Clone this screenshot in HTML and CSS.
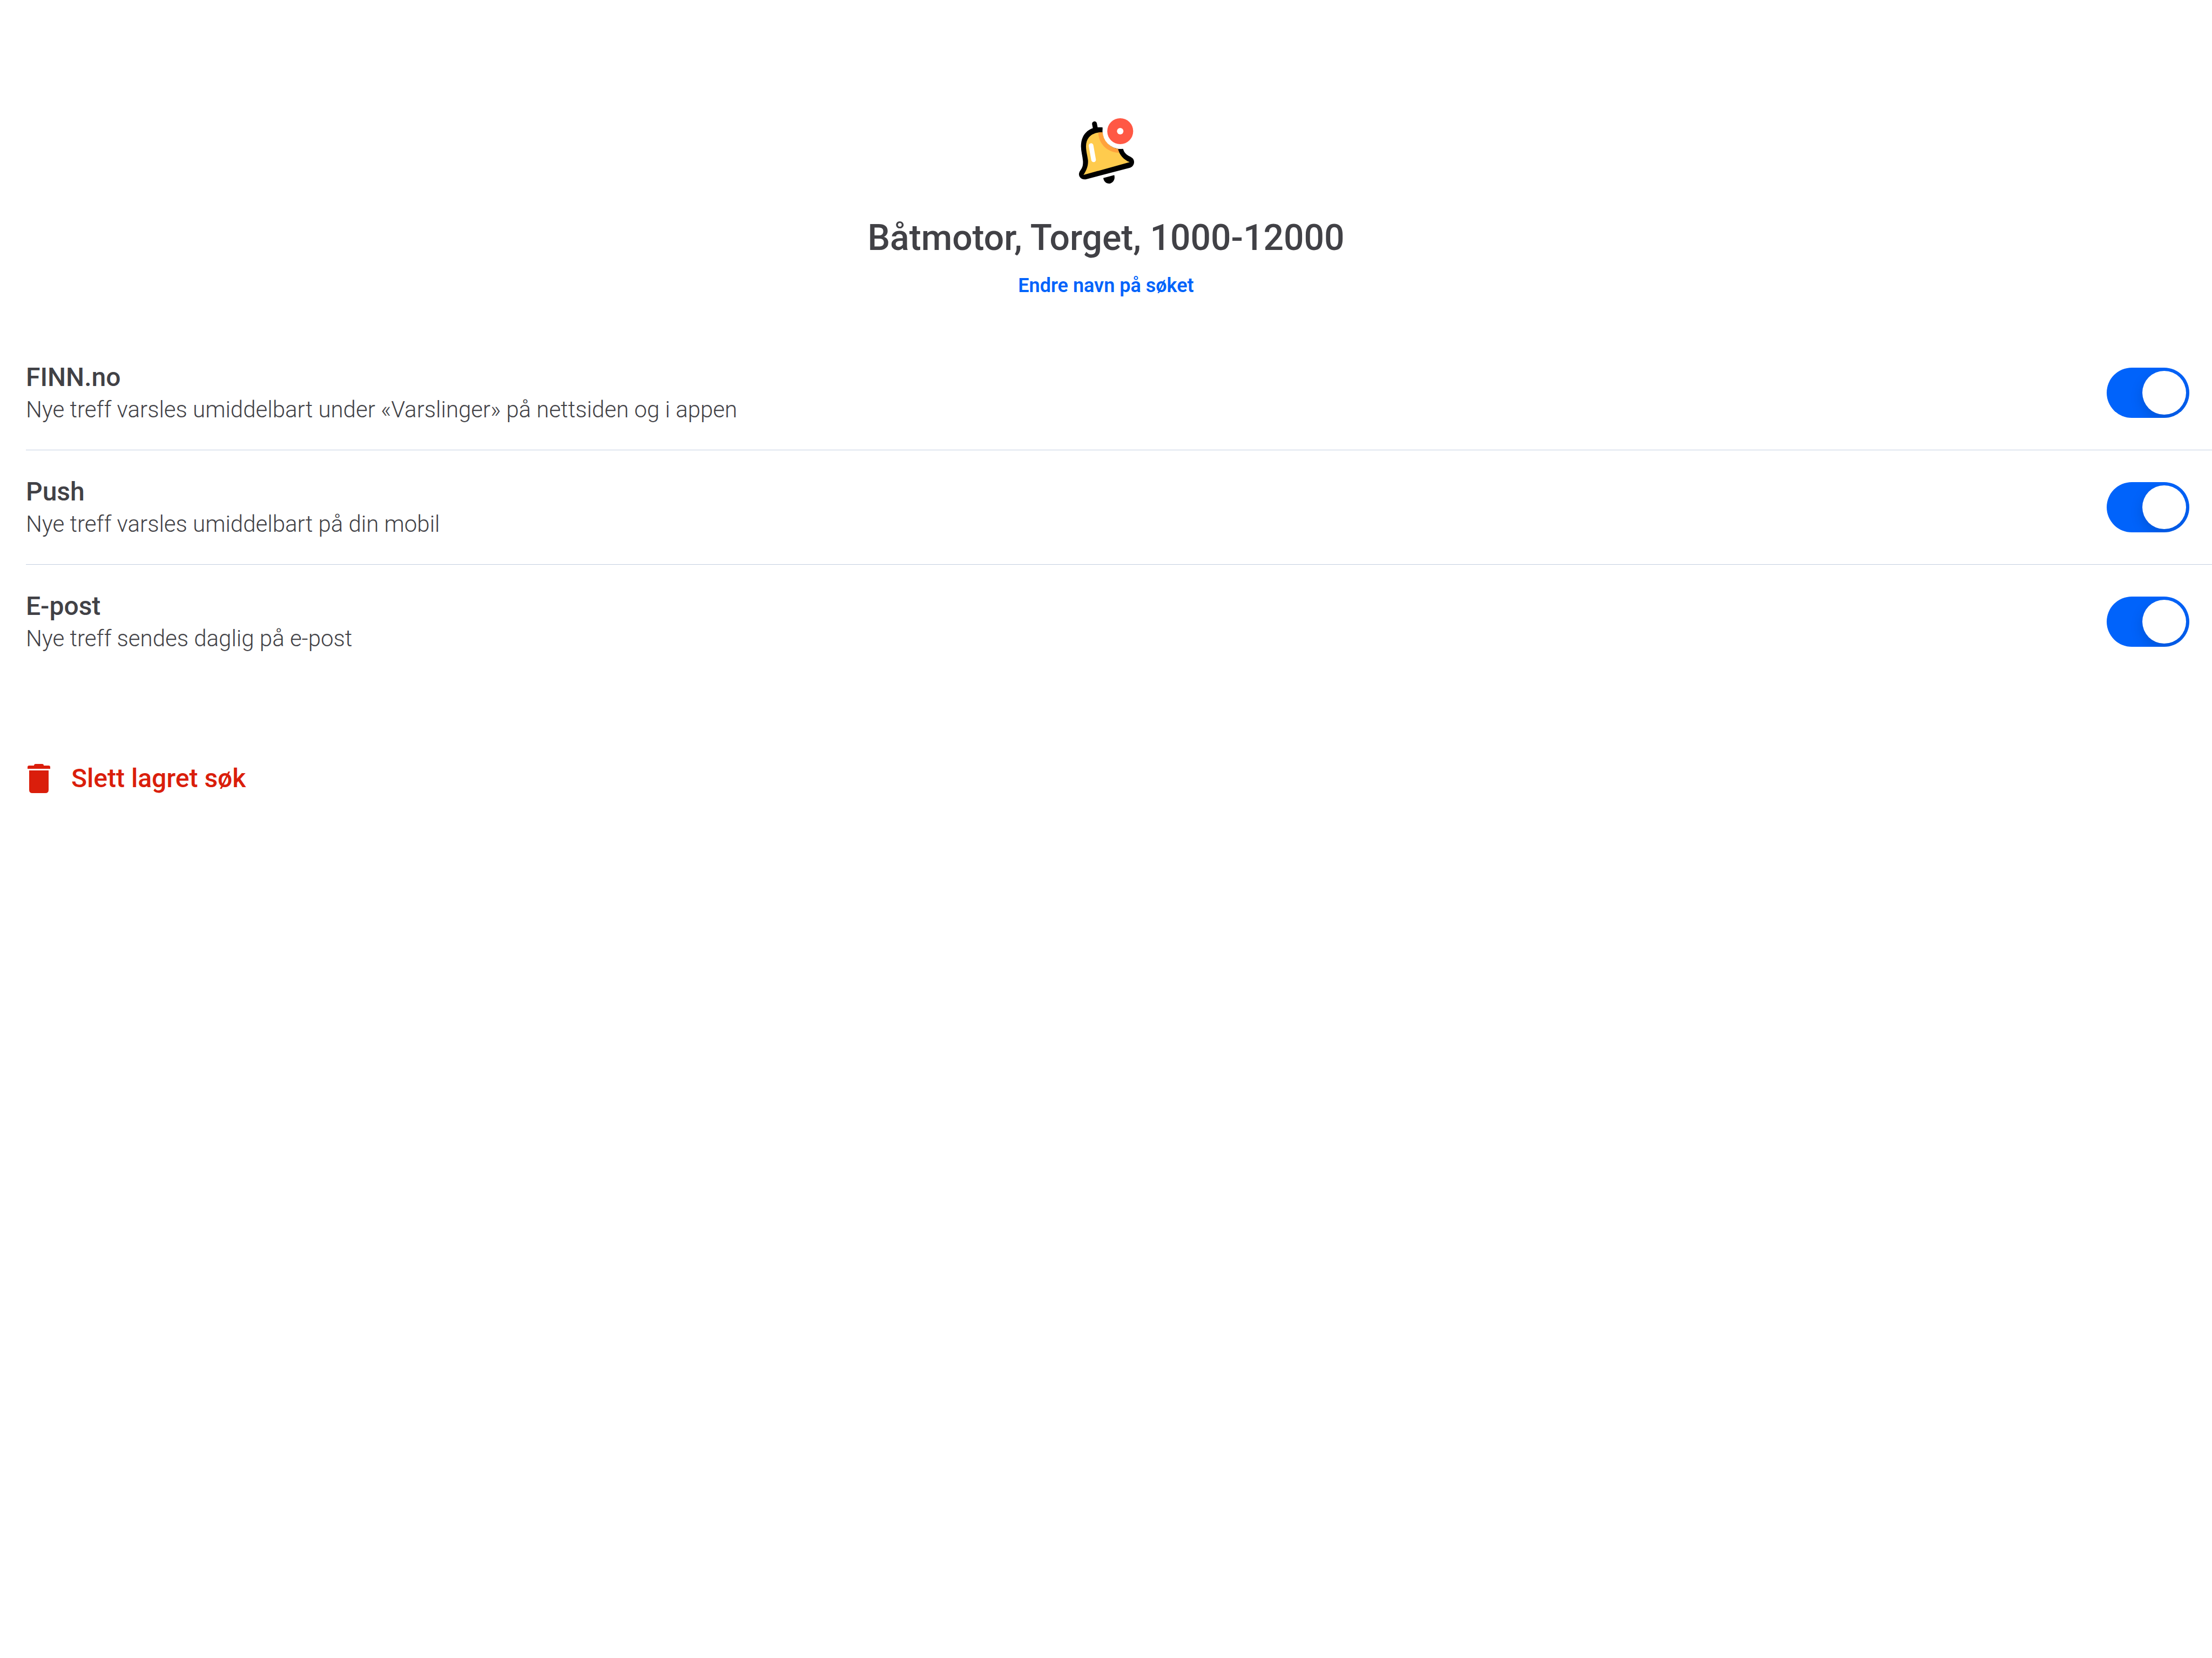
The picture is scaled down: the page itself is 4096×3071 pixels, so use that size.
FILE: index.html
```html
<!DOCTYPE html>
<html lang="no">
<head>
<meta charset="utf-8">
<title>Båtmotor, Torget, 1000-12000</title>
<link rel="stylesheet" href="styles.css">
</head>
<body>
<main class="page">
  <header class="header">
    <svg class="bell" viewBox="0 0 420 480" aria-hidden="true">
      <path d="M146 88L152 118" fill="none" stroke="#000" stroke-width="27" stroke-linecap="round"/>
      <path d="M191 108C166 106 140 108 121 119C88 137 71 171 71 213C71 240 80 268 82 295C83 319 79 332 69 345C58 360 57 373 65 384C74 396 88 399 103 395L343 332C358 328 366 314 366 300C366 286 358 277 344 270C322 260 310 246 305 227L276 227L191 135Z" fill="#000"/>
      <path d="M191 135C132 134 99 164 99 213C99 242 107 264 110 291C112 321 102 346 85 372L342 301C306 286 286 261 276 227C232 220 199 185 191 135Z" fill="#ffcb4d"/>
      <path d="M167 137Q178 134 191 135C198 185 230 222 276 227L283 249C216 247 169 198 167 137Z" fill="#ffa23c"/>
      <path d="M127 209L141 288" fill="none" stroke="#fff" stroke-width="26" stroke-linecap="round"/>
      <path d="M195 389L256 373C262 395 251 414 234 419C215 423 198 411 195 389Z" fill="#000"/>
      <circle cx="289" cy="129" r="98" fill="#fff"/>
      <circle cx="289" cy="129" r="72" fill="#ff5844"/>
      <circle cx="289" cy="129" r="18" fill="#fff"/>
    </svg>
    <h1 class="title">Båtmotor, Torget, 1000-12000</h1>
    <a class="rename" href="#">Endre navn på søket</a>
  </header>

  <ul class="channels">
    <li class="channel">
      <div class="channel-text">
        <label class="channel-name" for="finn">FINN.no</label>
        <p class="channel-info" id="finn-info">Nye treff varsles umiddelbart under «Varslinger» på nettsiden og i appen</p>
      </div>
      <input class="switch" type="checkbox" role="switch" id="finn" aria-describedby="finn-info" checked>
    </li>
    <li class="channel">
      <div class="channel-text">
        <label class="channel-name" for="push">Push</label>
        <p class="channel-info" id="push-info">Nye treff varsles umiddelbart på din mobil</p>
      </div>
      <input class="switch" type="checkbox" role="switch" id="push" aria-describedby="push-info" checked>
    </li>
    <li class="channel">
      <div class="channel-text">
        <label class="channel-name" for="epost">E-post</label>
        <p class="channel-info" id="epost-info">Nye treff sendes daglig på e-post</p>
      </div>
      <input class="switch" type="checkbox" role="switch" id="epost" aria-describedby="epost-info" checked>
    </li>
  </ul>

  <button class="delete" type="button">
    <svg class="trash" viewBox="0 0 14 18" aria-hidden="true">
      <path d="M0 3V2Q0 1 1 1H4Q4 0 5 0H9Q10 0 10 1H13Q14 1 14 2V3ZM1 4H13V16Q13 18 11 18H3Q1 18 1 16Z"/>
    </svg>
    Slett lagret søk
  </button>
</main>
</body>
</html>
```
FILE: styles.css
```css
* {
  box-sizing: border-box;
}

body {
  margin: 0;
  background: #fff;
  color: #414146;
  font-family: Roboto, "Liberation Sans", sans-serif;
}

.page {
  display: flex;
  flex-direction: column;
  padding-top: 200px;
}

.header {
  display: flex;
  flex-direction: column;
  align-items: center;
}

.bell {
  width: 140px;
  height: 160px;
}

.title {
  margin: 41px 0 28px;
  font-size: 66px;
  font-weight: 500;
  line-height: 80px;
}

.rename {
  color: #0063fb;
  font-size: 36px;
  font-weight: 600;
  line-height: 40px;
  text-decoration: none;
}

.channels {
  margin: 73px 0 0;
  padding: 0 0 0 48px;
  list-style: none;
}

.channel {
  display: flex;
  align-items: center;
  justify-content: space-between;
  padding: 44px 42px 44px 0;
  border-bottom: 1px solid #c3cfe0;
}

.channel:last-child {
  border-bottom-color: transparent;
}

.channel-text {
  padding-top: 3px;
}

.channel-name {
  display: block;
  font-size: 48px;
  font-weight: 500;
  line-height: 60px;
}

.channel-info {
  margin: 0;
  font-size: 42px;
  font-weight: 300;
  line-height: 60px;
}

.switch {
  flex: none;
  appearance: none;
  width: 153px;
  height: 93px;
  margin: 0;
  padding: 6px;
  border-radius: 47px;
  background: #ccc;
  overflow: hidden;
  cursor: pointer;
}

.switch::before {
  content: "";
  display: block;
  width: 81px;
  height: 81px;
  border-radius: 50%;
  background: #fff;
  box-shadow: 0 9px 24px rgba(0, 0, 0, 0.15);
}

.switch:checked {
  background: #0063fb;
}

.switch:checked::before {
  margin-left: auto;
}

.delete {
  display: flex;
  align-self: flex-start;
  align-items: center;
  gap: 39px;
  margin: 154px 0 0 48px;
  padding: 0 3px;
  border: 0;
  background: none;
  color: #da1e0b;
  font-family: inherit;
  font-size: 48px;
  font-weight: 500;
  line-height: 60px;
  cursor: pointer;
}

.trash {
  width: 42px;
  height: 54px;
  fill: currentColor;
}
```
